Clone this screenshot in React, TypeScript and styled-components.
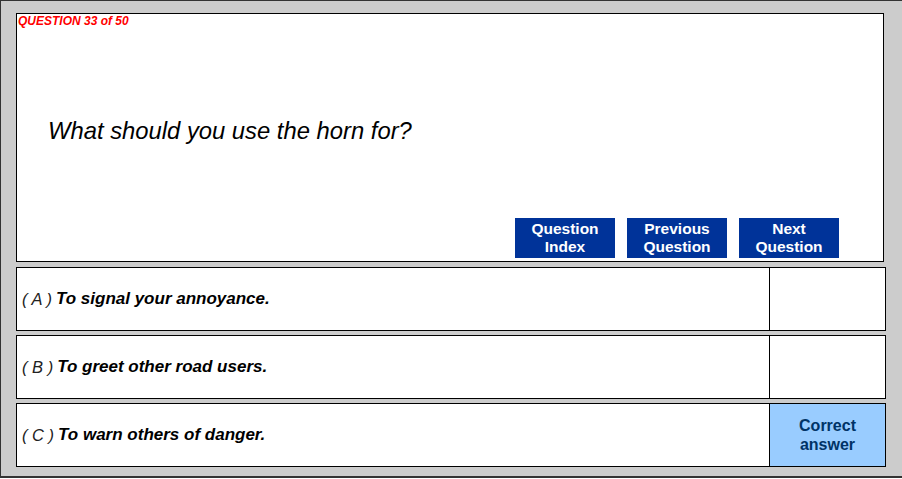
import styled, { createGlobalStyle } from 'styled-components';

const GlobalStyle = createGlobalStyle`
  html, body {
    margin: 0;
    padding: 0;
    background: #ffffff;
  }
  body {
    font-family: "Liberation Sans", Arial, sans-serif;
  }
`;

const Frame = styled.div`
  box-sizing: border-box;
  width: 902px;
  height: 478px;
  background-color: #cccccc;
  border-top: 1px solid #333333;
  border-left: 1px solid #333333;
  border-bottom: 2px solid #333333;
  padding: 12px 0 0 15px;
  display: flex;
  flex-direction: column;
`;

const QuestionPanel = styled.div`
  box-sizing: border-box;
  width: 868px;
  height: 249px;
  background: #ffffff;
  border: 1px solid #000000;
  display: flex;
  flex-direction: column;
`;

const Counter = styled.div`
  margin-left: 1px;
  color: #ff0000;
  font-size: 12px;
  font-weight: bold;
  font-style: italic;
  line-height: 14px;
`;

const QuestionText = styled.div`
  margin: 90px 0 0 31px;
  font-size: 23.8px;
  font-style: italic;
  line-height: 26px;
  color: #000000;
`;

const NavBar = styled.div`
  margin-top: auto;
  display: flex;
  justify-content: flex-end;
  gap: 12px;
  padding: 0 44px 3px 0;
`;

const NavButton = styled.button`
  box-sizing: border-box;
  width: 100px;
  height: 40px;
  border: none;
  padding: 0;
  background-color: #003399;
  color: #ffffff;
  font-family: "Liberation Sans", Arial, sans-serif;
  font-size: 15.5px;
  font-weight: bold;
  line-height: 18.5px;
  cursor: pointer;
`;

const AnswerList = styled.div`
  margin-top: 5px;
  display: flex;
  flex-direction: column;
  gap: 4px;
`;

const AnswerRow = styled.div`
  box-sizing: border-box;
  width: 870px;
  height: 64px;
  background: #ffffff;
  border: 1px solid #000000;
  display: flex;
`;

const AnswerText = styled.div`
  flex: 1;
  display: flex;
  align-items: center;
  padding-left: 5px;
  border-right: 1px solid #000000;
  font-size: 17px;
  font-style: italic;
  color: #000000;
`;

const Letter = styled.span`
  font-weight: normal;
  color: #222222;
  margin-right: 4px;
  font-size: 16.5px;
  white-space: pre;
`;

const Option = styled.span`
  font-weight: bold;
`;

const ResultCell = styled.div<{ $correct?: boolean }>`
  width: 115px;
  display: flex;
  align-items: center;
  justify-content: center;
  text-align: center;
  background-color: ${(p) => (p.$correct ? '#99ccff' : '#ffffff')};
  color: #003366;
  font-size: 16px;
  font-weight: bold;
  line-height: 19px;
`;

const answers = [
  { key: 'A', text: 'To signal your annoyance.', correct: false },
  { key: 'B', text: 'To greet other road users.', correct: false },
  { key: 'C', text: 'To warn others of danger.', correct: true },
];

export default function App() {
  return (
    <>
      <GlobalStyle />
      <Frame>
        <QuestionPanel>
          <Counter>QUESTION 33 of 50</Counter>
          <QuestionText>What should you use the horn for?</QuestionText>
          <NavBar>
            <NavButton>Question<br />Index</NavButton>
            <NavButton>Previous<br />Question</NavButton>
            <NavButton>Next<br />Question</NavButton>
          </NavBar>
        </QuestionPanel>
        <AnswerList>
          {answers.map((a) => (
            <AnswerRow key={a.key}>
              <AnswerText>
                <Letter>{`( ${a.key} )`}</Letter>
                <Option>{a.text}</Option>
              </AnswerText>
              <ResultCell $correct={a.correct}>
                {a.correct && (
                  <span>
                    Correct<br />answer
                  </span>
                )}
              </ResultCell>
            </AnswerRow>
          ))}
        </AnswerList>
      </Frame>
    </>
  );
}
